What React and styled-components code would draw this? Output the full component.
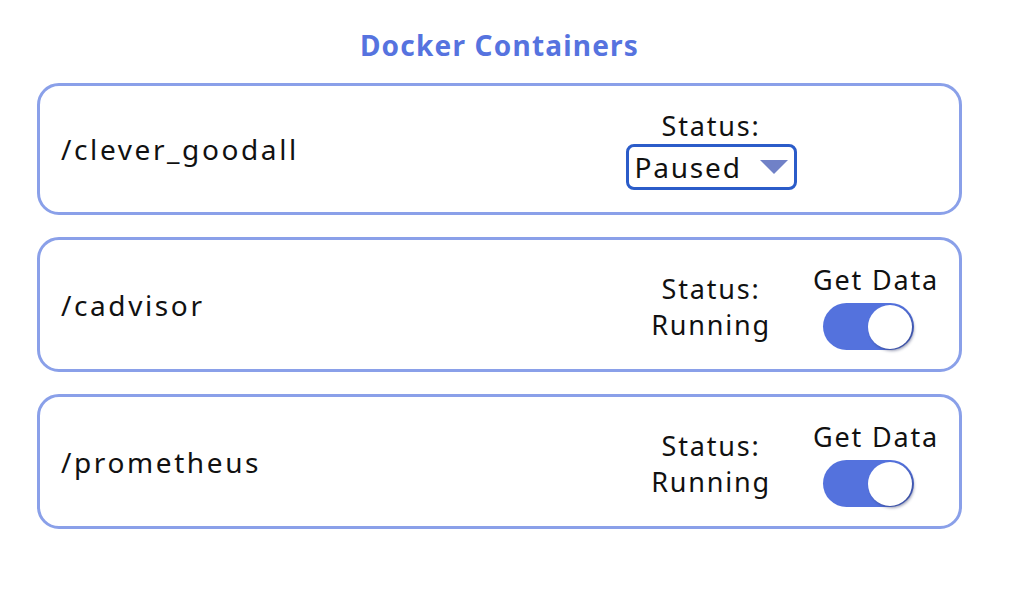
import React from 'react';
import styled, { createGlobalStyle } from 'styled-components';

const GlobalStyle = createGlobalStyle`
  body {
    margin: 0;
    background: #fff;
    font-family: "Noto Sans", "Open Sans", sans-serif;
    color: #111;
  }
`

const Page = styled.div`
  width: 925px;
  padding: 26px 0 0 37px;
  display: flex;
  flex-direction: column;
`

const Title = styled.h2`
  margin: 0 0 19px;
  text-align: center;
  font-size: 28px;
  font-weight: 700;
  color: #5673df;
  line-height: 38px;
  letter-spacing: 1.2px;
`

const List = styled.div`
  display: flex;
  flex-direction: column;
  gap: 22px;
`

const Card = styled.div`
  box-sizing: border-box;
  height: ${p => p.h}px;
  border: 3px solid #8aa0e9;
  border-radius: 22px;
  display: grid;
  grid-template-columns: 1fr 196px 134px;
  align-items: center;
  padding: 0 16px 0 21px;
  letter-spacing: 1.8px;
`

const Name = styled.div`
  font-size: 28px;
  letter-spacing: 2.6px;
`

const StatusCol = styled.div`
  display: flex;
  flex-direction: column;
  align-items: center;
  font-size: 27px;
  line-height: ${p => p.lh}px;
  text-align: center;
  margin-top: ${p => p.shift || 0}px;
`

const Select = styled.div`
  box-sizing: border-box;
  flex-shrink: 0;
  width: 171px;
  height: 46px;
  margin-top: 2px;
  border: 3px solid #2b5cc9;
  border-radius: 8px;
  display: flex;
  align-items: center;
  justify-content: space-between;
  padding: 0 6px 0 6px;
  font-size: 28px;
  line-height: 36px;
`

const Arrow = styled.span`
  width: 0;
  height: 0;
  border-left: 14px solid transparent;
  border-right: 14px solid transparent;
  border-top: 14px solid #7081c7;
`

const ToggleCol = styled.div`
  display: flex;
  flex-direction: column;
  align-items: center;
  font-size: 27px;
  line-height: 34px;
  white-space: nowrap;
  margin-top: 4px;
`

const Track = styled.div`
  width: 91px;
  height: 47px;
  margin: 6px 16px 0 0;
  border-radius: 24px;
  background: #5472dd;
  display: flex;
  align-items: center;
  justify-content: ${p => (p.on ? 'flex-end' : 'flex-start')};
  padding: 0 2px;
  box-sizing: border-box;
`

const Knob = styled.div`
  width: 44px;
  height: 44px;
  border-radius: 50%;
  background: #fff;
  box-shadow: 2px 2px 3px rgba(30, 40, 90, 0.45);
`

const containers = [
  { name: '/clever_goodall', status: 'Paused' },
  { name: '/cadvisor', status: 'Running' },
  { name: '/prometheus', status: 'Running' },
]

const App = () => (
  <>
    <GlobalStyle />
    <Page>
      <Title>Docker Containers</Title>
      <List>
        {containers.map((c, i) => (
          <Card key={c.name} h={i === 0 ? 132 : 135}>
            <Name>{c.name}</Name>
            {c.status === 'Paused' ? (
              <StatusCol shift={2} lh={32}>
                <span>Status:</span>
                <Select>
                  Paused
                  <Arrow />
                </Select>
              </StatusCol>
            ) : (
              <StatusCol shift={4} lh={36}>
                <span>Status:</span>
                <span>{c.status}</span>
              </StatusCol>
            )}
            {c.status === 'Running' ? (
              <ToggleCol>
                Get Data
                <Track on>
                  <Knob />
                </Track>
              </ToggleCol>
            ) : (
              <div />
            )}
          </Card>
        ))}
      </List>
    </Page>
  </>
)

export default App
